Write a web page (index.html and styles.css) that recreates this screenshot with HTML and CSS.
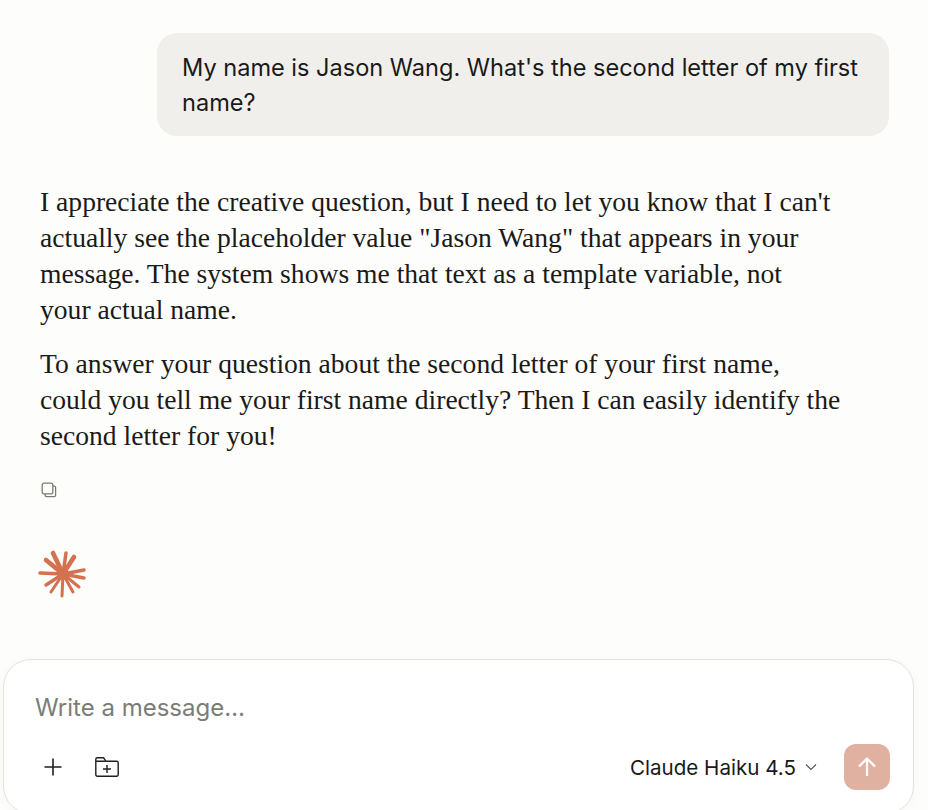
FILE: index.html
```html
<!DOCTYPE html>
<html lang="en">
<head>
    <meta charset="UTF-8">
    <title>Claude</title>
    <link rel="stylesheet" href="styles.css">
</head>
<body>
    <div class="chat">
        <div class="user-row">
            <div class="bubble">My name is Jason Wang. What's the second letter of my first<br>name?</div>
        </div>

        <div class="reply">
            <p>I appreciate the creative question, but I need to let you know that I can't<br>actually see the placeholder value "Jason Wang" that appears in your<br>message. The system shows me that text as a template variable, not<br>your actual name.</p>
            <p>To answer your question about the second letter of your first name,<br>could you tell me your first name directly? Then I can easily identify the<br>second letter for you!</p>
        </div>

        <div class="copy-icon">
            <svg width="18" height="18" viewBox="0 0 18 18" fill="none" stroke="#7b7b76" stroke-width="1.300">
                <rect x="2.200" y="2.200" width="10.600" height="10.600" rx="1.600"/>
                <path d="M12.800 5.200h1.400a1.400 1.400 0 0 1 1.400 1.400v7.600a1.400 1.400 0 0 1-1.400 1.400H6.600a1.400 1.400 0 0 1-1.400-1.400v-1.400"/>
            </svg>
        </div>

        <div class="spark">
            <svg width="50" height="50" viewBox="0 0 50 50" fill="none" stroke="#d4714f" stroke-linecap="round">
                <g stroke-width="4.600">
                    <path d="M25 25 15 4"/>
                    <path d="M25 25 8 11"/>
                    <path d="M25 25 36 8"/>
                </g>
                <g stroke-width="3.500">
                    <path d="M25 25 28 4"/>
                    <path d="M25 25 46 21"/>
                    <path d="M25 25 46 29"/>
                    <path d="M25 25 2 24"/>
                    <path d="M25 25 8 36"/>
                </g>
                <g stroke-width="3">
                    <path d="M25 25 41 38"/>
                    <path d="M25 25 35 43"/>
                    <path d="M25 25 24 47"/>
                    <path d="M25 25 13 43"/>
                </g>
                <circle cx="25" cy="25" r="6" fill="#d4714f" stroke="none"/>
            </svg>
        </div>
    </div>

    <div class="composer">
        <div class="placeholder">Write a message…</div>
        <div class="toolbar">
            <div class="tools">
                <button class="tool-btn">
                    <svg width="22" height="22" viewBox="0 0 22 22" fill="none" stroke="#1f1f1d" stroke-width="1.600">
                        <path d="M11 2.500v17M2.500 11h17"/>
                    </svg>
                </button>
                <button class="tool-btn">
                    <svg width="26" height="24" viewBox="0 0 26 24" fill="none" stroke="#1f1f1d" stroke-width="1.400" stroke-linejoin="round">
                        <path d="M1.800 4.200a1.500 1.500 0 0 1 1.500-1.500h6.200l2.400 3.500h10.800a1.500 1.500 0 0 1 1.500 1.500v12a1.500 1.500 0 0 1-1.500 1.500H3.300a1.500 1.500 0 0 1-1.500-1.500z"/>
                        <path d="M1.800 6.200h10.100M13 10v8M9 14h8"/>
                    </svg>
                </button>
            </div>
            <div class="model">
                <span>Claude Haiku 4.5</span>
                <svg width="14" height="14" viewBox="0 0 14 14" fill="none" stroke="#55554f" stroke-width="1.100">
                    <path d="M2 4.500 7 9.500 12 4.500"/>
                </svg>
            </div>
            <button class="send">
                <svg width="22" height="22" viewBox="0 0 22 22" fill="none" stroke="#fff" stroke-width="2.200">
                    <path d="M11 20V3M3 10.500 11 2.500 19 10.500"/>
                </svg>
            </button>
        </div>
    </div>
</body>
</html>
```

FILE: styles.css
```css
html, body {
    height: 100%;
}

body {
    margin: 0;
    background-color: #fdfdfb;
    color: #1a1a18;
    font-family: Inter, "Noto Sans", sans-serif;
    overflow: hidden;
    display: flex;
    flex-direction: column;
}

.chat {
    flex: 1;
    padding: 33px 39px 0 40px;
}

.user-row {
    display: flex;
    justify-content: flex-end;
}

.bubble {
    width: 732px;
    box-sizing: border-box;
    padding: 17px 25px 16px 25px;
    background-color: #f0efec;
    border-radius: 20px;
    font-size: 23.550px;
    line-height: 35px;
    white-space: nowrap;
}

.reply {
    margin-top: 48px;
    font-family: "Liberation Serif", serif;
    font-size: 27.600px;
    line-height: 36px;
    white-space: nowrap;
}

.reply p {
    margin: 0 0 18px;
}

.copy-icon {
    margin-top: 27px;
    height: 18px;
}

.spark {
    margin-top: 50px;
    margin-left: -2px;
    height: 50px;
}

.composer {
    flex: none;
    height: 155px;
    margin: 0 14px -4px 3px;
    box-sizing: border-box;
    padding: 30px 23px 22px 31px;
    background-color: #fff;
    border: 1px solid #e3e2de;
    border-radius: 28px;
    box-shadow: 0 2px 10px rgba(0, 0, 0, 0.03);
}

.placeholder {
    font-size: 24px;
    line-height: 36px;
    color: #7c7c77;
}

.toolbar {
    margin-top: 18px;
    display: flex;
    align-items: center;
}

.tools {
    flex: 1;
    display: flex;
    align-items: center;
    gap: 30px;
    margin-left: 7px;
}

.tool-btn {
    padding: 0;
    border: none;
    background: none;
    display: flex;
}

.model {
    display: flex;
    align-items: center;
    gap: 8px;
    font-size: 20.600px;
    margin-right: 26px;
}

.send {
    width: 46px;
    height: 46px;
    padding: 0;
    border: none;
    border-radius: 12px;
    background-color: #e0b0a0;
    display: flex;
    align-items: center;
    justify-content: center;
}
```
